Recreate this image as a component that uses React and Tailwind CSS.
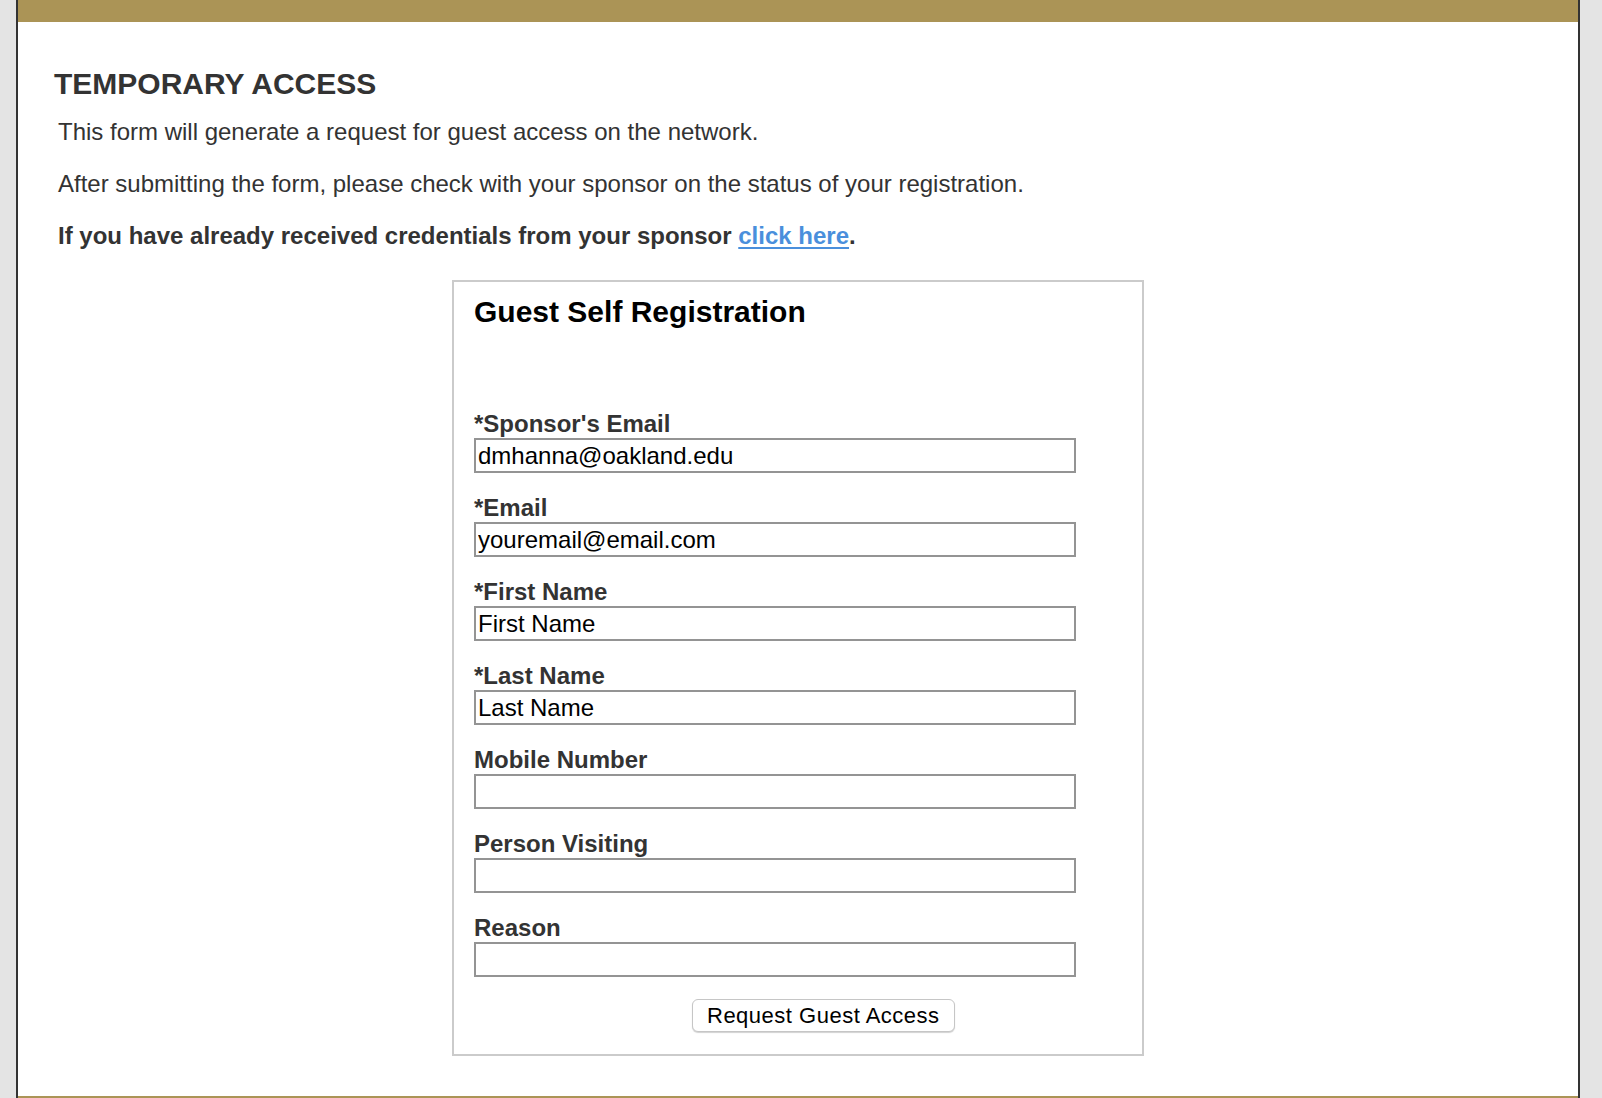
import React from "react";

const fields = [
  { label: "*Sponsor's Email", value: "dmhanna@oakland.edu" },
  { label: "*Email", value: "youremail@email.com" },
  { label: "*First Name", value: "First Name" },
  { label: "*Last Name", value: "Last Name" },
  { label: "Mobile Number", value: "" },
  { label: "Person Visiting", value: "" },
  { label: "Reason", value: "" },
];

const Field = ({ label, value }) => (
  <div className="mb-[21px] last:mb-0">
    <label className="block text-[24px] leading-[28px] font-bold text-[#333]">{label}</label>
    <input
      type="text"
      defaultValue={value}
      className="block w-[602px] h-[35px] border-2 border-[#949494] bg-white px-[2px] text-[24px] text-black outline-none"
      style={{ fontFamily: "inherit" }}
    />
  </div>
);

const App = () => {
  return (
    <div
      className="h-screen bg-[#e4e4e4] pl-[16px] pr-[22px] overflow-hidden"
      style={{ fontFamily: '"Liberation Sans", Arial, Helvetica, sans-serif' }}
    >
      <div className="h-full flex flex-col bg-white border-x-2 border-[#333]">
        <header className="h-[22px] shrink-0 bg-[#ab9456]"></header>

        <main className="flex-1 min-h-0 pt-[45px] pb-[40px] pl-[36px]">
          <h1 className="text-[30px] leading-[34px] font-bold text-[#333]">TEMPORARY ACCESS</h1>
          <div className="pl-[4px] text-[24px] leading-[28px] text-[#333]">
            <p className="mt-[17px]">This form will generate a request for guest access on the network.</p>
            <p className="mt-[24px]">After submitting the form, please check with your sponsor on the status of your registration.</p>
            <p className="mt-[24px] font-bold">
              If you have already received credentials from your sponsor{" "}
              <a href="#" className="text-[#4a8fdc] underline underline-offset-[3px]">click here</a>.
            </p>
          </div>

          <div className="-ml-[36px] mt-[30px] flex justify-center">
            <form
              className="w-[692px] border-2 border-[#cbcbcb] pt-[13px] pb-[22px] pl-[20px] pr-[20px]"
              onSubmit={(e) => e.preventDefault()}
            >
              <h2 className="text-[30px] leading-[34px] font-bold text-black">Guest Self Registration</h2>
              <div className="mt-[81px]">
                {fields.map((f) => (
                  <Field key={f.label} label={f.label} value={f.value} />
                ))}
              </div>
              <div className="mt-[22px] pl-[218px]">
                <button
                  type="submit"
                  className="h-[33px] px-[14px] rounded-[6px] border border-[#c6c6c6] bg-white text-[22px] leading-[26px] tracking-[0.5px] text-black shadow-[0_1px_1px_rgba(0,0,0,0.18)]"
                >
                  Request Guest Access
                </button>
              </div>
            </form>
          </div>
        </main>

        <footer className="h-[2px] shrink-0 bg-[#ab9456]"></footer>
      </div>
    </div>
  );
};

export default App;
